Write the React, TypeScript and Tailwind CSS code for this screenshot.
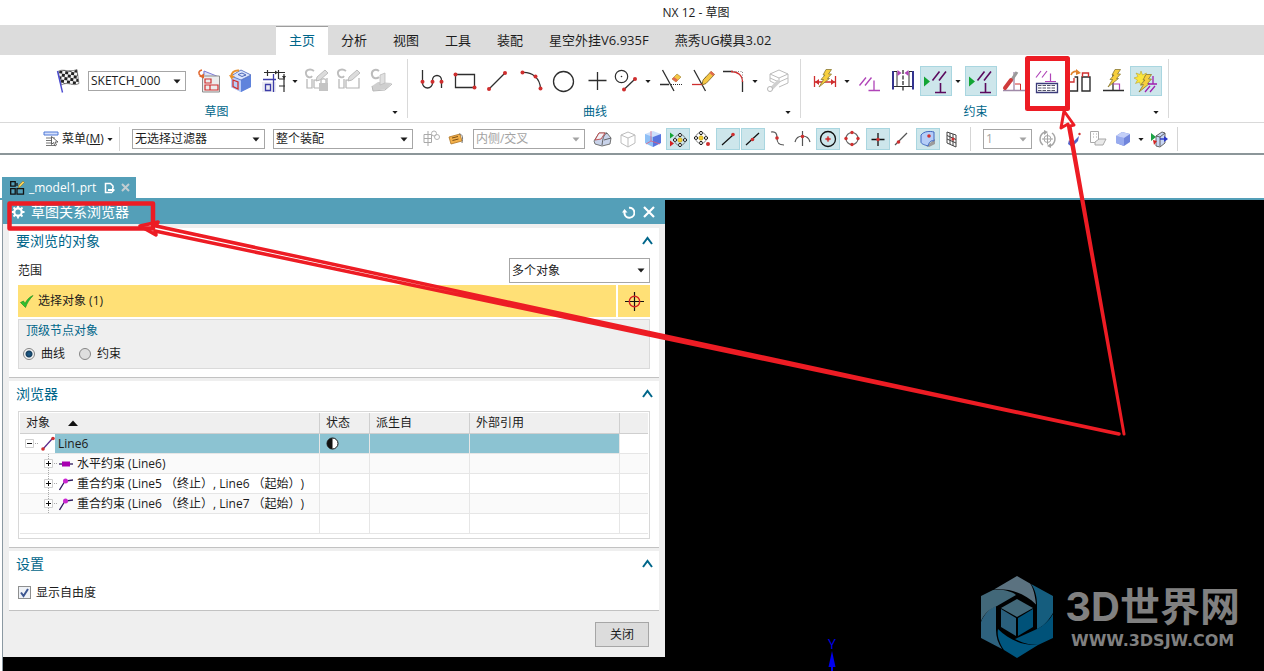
import { useState } from "react";
import type { ReactNode } from "react";
import clsx from "clsx";

const TABS = ["主页", "分析", "视图", "工具", "装配", "星空外挂V6.935F", "燕秀UG模具3.02"];

const RED = "#cf2f2f";
const INK = "#2e2e2e";
const MAGENTA = "#b044b8";
const PLUM = "#5b0a5e";

export default function App() {
  return (
    <div className="relative flex min-h-screen flex-col overflow-hidden bg-white font-['Open_Sans','Noto_Sans_CJK_SC',sans-serif] text-xs text-[#1c1c1c] [text-spacing-trim:space-all]">
      <header className="flex h-[25px] items-center justify-center pl-32">
        <h1 className="text-xs">NX 12 - 草图</h1>
      </header>
      <TabBar />
      <Ribbon />
      <SelectionBar />
      <PartTab />
      <main className="flex flex-1 border-t-2 border-[#549fb8] pl-0.5">
        <div className="flex flex-1 items-start border-l border-[#8b99a2] bg-black">
          <RelationsDialog />
          <Viewport />
        </div>
      </main>
      <Annotations />
    </div>
  );
}

/* ---------- shared bits ---------- */

const Caret = ({ className = "" }: { className?: string }) => (
  <svg className={clsx("pointer-events-none shrink-0", className)} width="8" height="5" viewBox="0 0 8 5">
    <path d="M0.5 0.5h7L4 4.5z" fill="currentColor" />
  </svg>
);

type PickerProps = { label: string; options: string[]; className: string; disabled?: boolean };

const Picker = ({ label, options, className, disabled }: PickerProps) => (
  <div className={clsx("relative flex shrink-0 items-center", className, disabled && "text-[#a3a3a3]")}>
    <select
      aria-label={label}
      disabled={disabled}
      className="h-full w-full appearance-none border border-[#a6a6a6] bg-white pl-0.5 text-xs"
    >
      {options.map((o) => (
        <option key={o}>{o}</option>
      ))}
    </select>
    <Caret className="absolute right-[5px]" />
  </div>
);

type ToolProps = { label: string; on?: boolean; children: ReactNode };

const Tool = ({ label, on, children }: ToolProps) => (
  <button
    aria-label={label}
    className={clsx("h-[30px] w-8 shrink-0", on && "bg-[#cde6eb] outline outline-1 -outline-offset-1 outline-[#a9d6e0]")}
  >
    <svg width="32" height="30" viewBox="0 0 32 30" fill="none">
      {children}
    </svg>
  </button>
);

// icon + drop-down caret that belong together
const SplitTool = ({ label, on, wide, children }: ToolProps & { wide?: boolean }) => (
  <div className="flex shrink-0 items-center">
    {on || wide ? (
      <Tool label={label} on={on}>
        {children}
      </Tool>
    ) : (
      <button aria-label={label} className="h-[30px] w-7">
        <svg width="28" height="30" viewBox="0 0 28 30" fill="none">
          {children}
        </svg>
      </button>
    )}
    <button aria-label={label + "选项"} className="flex h-[30px] w-3 items-center justify-center">
      <Caret className="w-1.5" />
    </button>
  </div>
);

const MiniTool = ({ label, on, children }: ToolProps) => (
  <button
    aria-label={label}
    className={clsx("h-[22px] w-6 shrink-0", on && "bg-[#cde6eb] outline outline-1 -outline-offset-1 outline-[#a9d6e0]")}
  >
    <svg width="24" height="22" viewBox="0 0 24 22" fill="none">
      {children}
    </svg>
  </button>
);

const Dot = ({ x, y, r = 2 }: { x: number; y: number; r?: number }) => <circle cx={x} cy={y} r={r} fill={RED} />;

const Bolt = ({ x = 0, y = 0 }: { x?: number; y?: number }) => (
  <path
    transform={`translate(${x} ${y})`}
    d="M8 0.5h5.500L10.500 5h3L9.500 9.500h2L1 18l4.500-7.500H3L7 6H5z"
    fill="#f7cf3d"
    stroke="#8a7a35"
    strokeWidth="0.8"
  />
);

/* ---------- top bars ---------- */

const TabBar = () => (
  <nav className="flex h-[30px] shrink-0 items-end bg-[#dcdcdc] pl-[276px] text-[13px]">
    {TABS.map((t, i) => (
      <a
        key={t}
        href="#"
        className={clsx(
          "flex h-[29px] shrink-0 items-center whitespace-nowrap px-[13px]",
          i === 0 && "border-t border-[#9d9d9d] bg-white text-[#00668a]"
        )}
      >
        {t}
      </a>
    ))}
  </nav>
);

type GroupProps = { title: string; className: string; labelClass?: string; children: ReactNode };

const Group = ({ title, className, labelClass, children }: GroupProps) => (
  <section className="flex shrink-0 flex-col justify-between border-r border-[#d9d9d9]">
    <div className={clsx("flex h-[37px] items-center pt-[7px]", className)}>{children}</div>
    <div className="flex items-center pr-1.5 leading-3">
      <span className={clsx("flex-1 text-center text-[#00668a]", labelClass)}>{title}</span>
      <button aria-label={title + "选项"} className="flex h-3 w-3 items-center justify-center">
        <Caret className="w-1.5" />
      </button>
    </div>
  </section>
);

const ParallelPerp = () => (
  <>
    <path d="M4 10.500V20.500L10 15.500z" fill="#12a534" />
    <path d="M12.500 14.500L19.500 5.500M19 14.500L26 5.500M20.500 17v9M15 26.500h11" stroke={PLUM} strokeWidth="1.600" />
  </>
);

const Ribbon = () => (
  <div className="flex h-[68px] shrink-0 border-b border-[#d9d9d9] py-1">
    <Group title="草图" className="w-[407px] pl-[51px]" labelClass="pl-11">
      <Tool label="完成草图">
        <defs>
          <pattern id="check" width="6" height="6" patternUnits="userSpaceOnUse" patternTransform="rotate(8)">
            <rect width="6" height="6" fill="#f4f4f4" />
            <rect width="3" height="3" fill="#222" />
            <rect x="3" y="3" width="3" height="3" fill="#222" />
          </pattern>
        </defs>
        <path d="M7 5.500C12 2 17 7 26 3.500L28 17.500C22 21 17 15 10.500 19z" fill="url(#check)" stroke="#666" strokeWidth="0.7" />
        <path d="M6.500 5l5 21.500" stroke="#4a4ad0" strokeWidth="1.400" />
      </Tool>
      <Picker label="草图名称" options={["SKETCH_000"]} className="ml-[5px] mr-[7px] h-5 w-[98px]" />
      <Tool label="定向到草图">
        <path d="M11 5l14 6v14H9V9" fill="#dfe4f6" />
        <path d="M11 5l15 6M11 5v4" stroke="#7b79d6" />
        <path d="M9.500 10h17v16h-17z" fill="#ececec" stroke="#8c8c8c" />
        <path d="M12 13h6v4h-6zM12 19h5v5h-5zM17 19h8v5h-8z" stroke={RED} strokeWidth="1.200" />
        <path d="M9 4c-4 1-4 4-1 6" stroke="#e0662e" strokeWidth="1.500" />
        <path d="M6 10.500l5-3v5z" fill="#e0662e" />
      </Tool>
      <Tool label="重新附着">
        <path d="M6 10L16 4l10 5v12l-10 5-10-5z" fill="#8fabee" />
        <path d="M6 10l10 4v12L6 21z" fill="#b9ccf8" />
        <path d="M16 14l10-5v12l-10 5z" fill="#5f83dc" />
        <path d="M16 4l10 5-10 5-10-4z" fill="#dbe5fc" stroke="#4e68b9" strokeWidth="0.8" />
        <path d="M13 8.500l4-1.500 4 2-4 1.500z" stroke="#4e68b9" />
        <path d="M8 14l5 2v7l-5-2.500z" stroke={RED} strokeWidth="1.300" />
        <path d="M14 4.500C9 4 6 7 6.500 11" stroke="#e8902c" strokeWidth="2" />
        <path d="M4 9l6 1-3.500 3.500z" fill="#e8902c" />
      </Tool>
      <SplitTool label="尺寸" wide>
        <path d="M5 16h14v10H5z" fill="#ececf3" />
        <path d="M7 6.500h21M10.500 4v6M21.500 4v9M27 8v18M22 13h6M22 20h6" stroke={INK} strokeWidth="1.200" />
        <path d="M6 13.500h13M16.500 8v18M8.500 18.500h5v6h-5z" stroke="#3c3ca8" strokeWidth="1.300" />
        <path d="M21 6.500l-3-2v4zM27 13l-2-3h4z" fill={INK} />
      </SplitTool>
      <Tool label="创建定位尺寸">
        <GrayLoop />
        <path d="M18 17h9v8h-9z" fill="#c4c4c4" />
        <path d="M20 17v-3a3 3 0 0 1 5 0v3" stroke="#c4c4c4" strokeWidth="1.500" />
      </Tool>
      <Tool label="评估草图">
        <GrayLoop />
      </Tool>
      <Tool label="更新模型">
        <path d="M14 5C10 2 6 5 7 9s5 4 7 2" stroke="#bdbdbd" strokeWidth="2" />
        <path d="M7 20l6-4 14 1-6 6-13 2z" fill="#cfcfcf" />
        <path d="M15 9l5-2v10l-5 2z" fill="#e0e0e0" stroke="#bbb" strokeWidth="0.800" />
        <path d="M7 20l1 5 12-1 7-6" stroke="#b7b7b7" />
      </Tool>
    </Group>

    <Group title="曲线" className="w-[392px] gap-px pl-2">
      <Tool label="轮廓">
        <path d="M6.500 4v13a5 5 0 0 0 10 0v-3a4.500 4.500 0 0 1 9 0v8" stroke={INK} strokeWidth="1.300" />
        <Dot x={6.5} y={15.7} />
        <Dot x={16.5} y={15.7} />
        <Dot x={25.5} y={15.7} />
      </Tool>
      <Tool label="矩形">
        <path d="M6.500 8.500h19v13h-19z" stroke={INK} strokeWidth="1.300" />
        <Dot x={6.5} y={8.5} />
        <Dot x={25.5} y={21.5} />
      </Tool>
      <Tool label="直线">
        <path d="M7 23L23 7" stroke={INK} strokeWidth="1.300" />
        <Dot x={7} y={23} />
        <Dot x={23} y={7} />
      </Tool>
      <Tool label="圆弧">
        <path d="M7.500 6.500C17 6 25 12 25.500 22.500" stroke={INK} strokeWidth="1.300" />
        <Dot x={7.5} y={6.5} />
        <Dot x={20.5} y={10.5} />
        <Dot x={25.5} y={22.5} />
      </Tool>
      <Tool label="圆">
        <circle cx="15.500" cy="15.500" r="10" stroke={INK} strokeWidth="1.300" />
      </Tool>
      <Tool label="点">
        <path d="M16.500 6v18M7.500 14.500h18" stroke={INK} strokeWidth="1.300" />
      </Tool>
      <SplitTool label="派生曲线">
        <circle cx="7.500" cy="10.500" r="6.200" stroke={INK} strokeWidth="1.200" />
        <circle cx="7.500" cy="10.500" r="0.800" fill={INK} />
        <path d="M10 23.500L21 13" stroke={INK} strokeWidth="1.300" />
        <Dot x={10} y={23.5} />
        <Dot x={21} y={13} />
      </SplitTool>
      <Tool label="快速修剪">
        <path d="M7.500 4L19 25M5 18.500h9" stroke={INK} strokeWidth="1.300" />
        <path d="M16 18.500h11" stroke={INK} strokeDasharray="1 1" />
        <path d="M17 13l5-5 4 3-5 5z" fill="#f5c744" stroke="#9b7d2d" strokeWidth="0.600" />
        <path d="M17 13l2-2 4 3-2 2z" fill="#e06a50" />
      </Tool>
      <Tool label="快速延伸">
        <path d="M6 4l11.500 21M14 18.500L18 11" stroke={INK} strokeWidth="1.300" />
        <path d="M4 18.500h11" stroke={RED} strokeWidth="1.300" />
        <path d="M14 19l1-5 8-8.500 3.500 3-8.500 9z" fill="#f5c744" stroke="#7b6223" strokeWidth="0.800" />
        <path d="M21.500 7l1.500-2 3.500 3-1.500 2z" fill="#e06a50" />
      </Tool>
      <SplitTool label="圆角">
        <path d="M2 5.500h10M21.500 15v11" stroke={INK} strokeWidth="1.300" />
        <path d="M10 5.500c7 0 11.500 4 11.500 10.500" stroke={RED} strokeWidth="1.300" />
        <path d="M12 5.500h9.500V14" stroke="#888" strokeDasharray="1 1.500" />
      </SplitTool>
      <Tool label="编辑曲线">
        <path d="M8 8l9-4 9 4-9 4zM8 8v7l6 3M26 8v9l-9 4M17 12v5M8 12l9 4 9-4" stroke="#bcbcbc" />
        <path d="M17 15L9 23" stroke="#cfcfcf" strokeWidth="3.500" />
        <circle cx="8" cy="23" r="2.500" fill="#fff" stroke="#b5b5b5" />
      </Tool>
    </Group>

    <Group title="约束" className="w-[367px] gap-px pl-3">
      <SplitTool label="快速尺寸">
        <path d="M1.500 10v11M22.500 10v11M2 16h20" stroke={RED} strokeWidth="1.300" />
        <path d="M2 16l4-3v6zM22 16l-4-3v6z" fill={RED} />
        <Bolt x={5} y={3} />
      </SplitTool>
      <Tool label="几何约束">
        <path d="M5.500 19.500l6.500-8M11 19.500l6.500-8M20 14.500v10M14.500 24.500H26" stroke={MAGENTA} strokeWidth="1.300" />
      </Tool>
      <Tool label="设为对称">
        <path d="M6 5v18.500M26 5v18.500" stroke="#34348f" strokeWidth="2" />
        <path d="M7 5.500h3v15H7M25 5.500h-3v15h3M10 20.500h12" stroke={INK} />
        <path d="M16 4v22" stroke={INK} strokeWidth="1.300" strokeDasharray="4 1.500" />
        <path d="M10.500 4l4 3-4 3zM21.500 4l-4 3 4 3z" fill={MAGENTA} />
      </Tool>
      <SplitTool label="显示草图约束" on>
        <ParallelPerp />
      </SplitTool>
      <Tool label="显示约束" on>
        <ParallelPerp />
      </Tool>
      <Tool label="自动判断约束设置">
        <path d="M5 24.500h22M16 6v18" stroke="#a08aa8" strokeWidth="1.300" />
        <path d="M17 18h5.500v6" stroke={RED} />
        <path d="M19 6l-6 9" stroke="#9a9a9a" strokeWidth="3" />
        <path d="M13 14l-6 8" stroke="#cf3b3b" strokeWidth="4" strokeLinecap="round" />
      </Tool>
      <Tool label="草图关系浏览器">
        <path d="M5 11.500L10 5M11 11.500L16 5M19.500 7.500v8M14 15.500h11" stroke={MAGENTA} strokeWidth="1.200" />
        <path d="M5.500 17.500h21v9h-21z" fill="#fff" stroke="#3b3b7a" strokeWidth="1.300" />
        <path d="M7 19.500h18M7 22h18M7 24.500h18" stroke="#55556a" strokeDasharray="3.500 1" />
      </Tool>
      <Tool label="动画演示尺寸">
        <path d="M4 16h6v-4" stroke={RED} strokeWidth="1.300" />
        <path d="M4 25h9.500V11h-3M18 25V11h8v14z" stroke={INK} strokeWidth="1.400" />
        <path d="M18.500 11V7h6v4" stroke={RED} strokeWidth="1.400" />
        <path d="M7 9c1-4 5-4 7-3" stroke="#e0832e" strokeWidth="1.600" />
        <path d="M12 3l5 4-5 2z" fill="#e0832e" />
      </Tool>
      <Tool label="自动约束">
        <path d="M6 24.500h21M16 8v16" stroke={INK} strokeWidth="1.300" />
        <path d="M16 18h6.500v6" stroke={MAGENTA} strokeWidth="1.200" />
        <Bolt x={10} y={3} />
      </Tool>
      <Tool label="连续自动标注尺寸" on>
        <path d="M11 5l1.500 4 4-2-2 4 4 1.500-4 1.500 1.500 4-3.500-2-1.500 4-1.500-4-4 1.500 2-3.500L4 12l4-1.500L6 7l4 1.500z" fill="#fbe63c" stroke="#b59a1e" strokeWidth="0.500" />
        <Bolt x={8} y={8} />
        <path d="M23 10v8M18 18h9M15 26l5-6M20 26l5-6" stroke="#a01fb0" strokeWidth="1.300" />
      </Tool>
    </Group>
  </div>
);

const GrayLoop = () => (
  <>
    <path d="M13 5C9 2 4 4 5 8s5 4 6 2" stroke="#bdbdbd" strokeWidth="1.800" />
    <path d="M6 13v9h5v-9M13 22v-8h5M13 22h13V12" stroke="#b3b3b3" strokeWidth="1.200" />
    <path d="M15 15l1-4 8-7 3 3-8 7z" fill="#dcdcdc" stroke="#b0b0b0" strokeWidth="0.800" />
  </>
);

const PointWheel = ({ x, y }: { x: number; y: number }) => (
  <g transform={`translate(${x} ${y})`}>
    <circle r="5.500" stroke="#555" strokeWidth="0.700" />
    <circle r="2.200" fill="#f6d22e" stroke="#ae8f1e" strokeWidth="0.600" />
    {[0, 90, 180, 270].map((a) => (
      <ellipse key={a} cx="5" rx="1.700" ry="1.400" fill="#fff" stroke="#222" transform={`rotate(${a})`} />
    ))}
  </g>
);

const SelectionBar = () => (
  <div className="flex h-8 shrink-0 items-center border-b-2 border-[#8c9699] pt-0.5">
    <button className="ml-[43px] flex shrink-0 items-center gap-[3px]">
      <svg width="16" height="16" viewBox="0 0 16 16" fill="none">
        <path d="M1 1h14v3H1z" fill="#d5e0fb" stroke="#4f78d6" />
        <path d="M3 7h9M3 9.500h7M3 12h7M3 14.500h9" stroke="#777" />
        <path d="M8.500 5.500v8l2-2 1.500 3.500 1.500-1-1.500-3h3z" fill="#fff" stroke="#444" strokeWidth="0.800" />
      </svg>
      <span>
        菜单(<u>M</u>)
      </span>
      <Caret className="w-1.5" />
    </button>
    <i className="ml-1.5 h-6 w-px shrink-0 bg-[#d5d5d5]" />
    <Picker label="选择过滤器" options={["无选择过滤器"]} className="ml-3 h-5 w-[133px]" />
    <Picker label="选择范围" options={["整个装配"]} className="ml-2 h-5 w-[140px]" />
    <div className="ml-1.5 mr-[5px] flex shrink-0 gap-px">
      <MiniTool label="选择组">
        <path d="M9 3v15M5 6.500h7.500v8H5zM5 10.500h7.500" stroke="#a9a9a9" />
        <circle cx="15" cy="5.500" r="2.500" stroke="#b3b3b3" />
        <circle cx="18" cy="9" r="2.500" stroke="#b3b3b3" />
      </MiniTool>
      <MiniTool label="选择意图">
        <path d="M5 9l11-3 2 7-11 3z" fill="#f3b04a" stroke="#ad7323" strokeWidth="0.800" />
        <path d="M8 10l6-1.500M8.500 12.500l6-1.500" stroke="#7a4e15" />
        <path d="M15 6c4 0 4 4 3 9" stroke="#777" />
      </MiniTool>
    </div>
    <Picker label="框选规则" options={["内侧/交叉"]} className="h-5 w-[112px]" disabled />
    <div className="ml-1.5 flex shrink-0 gap-px">
      <MiniTool label="小平面体">
        <path d="M3 13l5-8h8l4 5-1 6-8 2-7-2z" fill="#c9d3ea" stroke="#666" strokeWidth="0.900" />
        <path d="M16 5c-4 2-4 6-5 12M13 12l7-2" stroke="#555" strokeWidth="0.900" />
        <path d="M8 5h6l-4 6-6 1z" fill="#f1f1f6" stroke="#b33" strokeWidth="0.800" />
      </MiniTool>
      <MiniTool label="线框">
        <path d="M5 7l7-3 7 3v8l-7 4-7-4zM5 7l7 3 7-3M12 10v9" stroke="#bdbdbd" />
      </MiniTool>
      <MiniTool label="着色">
        <path d="M4 6l8-3 8 3v9l-8 4-8-4z" fill="#cddffb" />
        <path d="M4 6l8 3v10l-8-4z" fill="#8fc0f6" />
        <path d="M12 9l8-3v9l-8 4z" fill="#5875df" />
        <path d="M10 3v10l-5 3M10 13l9 3" stroke="#e0617d" strokeWidth="0.800" />
      </MiniTool>
      <MiniTool label="启用捕捉点" on>
        <path d="M4 4.500l4 3-4 3z" fill="#12a534" />
        <path d="M4 12.500l4 3-4 3z" fill="#d32222" />
        <PointWheel x={14} y={12} />
      </MiniTool>
      <MiniTool label="捕捉点设置">
        <PointWheel x={10} y={10} />
        <Dot x={17} y={16} />
      </MiniTool>
      <MiniTool label="端点" on>
        <path d="M6 17L17 7" stroke="#111" strokeWidth="1.200" />
        <Dot x={17} y={6.5} r={1.8} />
      </MiniTool>
      <MiniTool label="中点" on>
        <path d="M5 17L18 5" stroke="#111" strokeWidth="1.200" />
        <Dot x={11.5} y={11.5} r={1.8} />
      </MiniTool>
      <MiniTool label="控制点">
        <path d="M5 4c5-1 6 2 6 6s1 7 7 7" stroke="#555" strokeWidth="1.200" />
        <Dot x={11} y={10} r={1.8} />
      </MiniTool>
      <MiniTool label="交点">
        <path d="M4 14c2-8 13-8 15 0M11.500 3v15" stroke="#555" strokeWidth="1.200" />
        <Dot x={11.5} y={8.5} r={1.8} />
      </MiniTool>
      <MiniTool label="圆弧中心" on>
        <circle cx="12" cy="11" r="7.500" stroke="#111" strokeWidth="1.300" />
        <path d="M9 11h6M12 8v6" stroke={RED} />
        <Dot x={12} y={11} r={1.8} />
      </MiniTool>
      <MiniTool label="象限点">
        <circle cx="11" cy="10.500" r="6" stroke="#666" strokeWidth="1.100" />
        <Dot x={11} y={4.5} r={1.7} />
        <Dot x={11} y={16.5} r={1.7} />
        <Dot x={5} y={10.5} r={1.7} />
        <Dot x={17} y={10.5} r={1.7} />
      </MiniTool>
      <MiniTool label="现有点" on>
        <path d="M12 5v13M5.500 11.500h13" stroke="#111" strokeWidth="1.300" />
        <Dot x={12} y={11.5} r={1.7} />
      </MiniTool>
      <MiniTool label="曲线上的点">
        <path d="M4 17L16 5" stroke="#555" strokeWidth="1.200" />
        <Dot x={7.5} y={14} r={1.8} />
      </MiniTool>
      <MiniTool label="面上的点" on>
        <path d="M10 18l9-7v5l-6 3z" fill="#9c9c9c" />
        <path d="M5 7c3-4 9-4 13-3v9c-3-1-5 1-6 5-3-1-7-2-7-4z" fill="#b5cdf8" stroke="#3e66c0" />
        <Dot x={13} y={8} r={1.8} />
      </MiniTool>
      <MiniTool label="有界栅格点">
        <path d="M6 4l9 3v12l-9-4zM9 5v11M12 6v12M6 7.500l9 4M6 11l9 4" stroke="#444" />
        <Dot x={12} y={11} r={1.6} />
      </MiniTool>
    </div>
    <i className="ml-[5px] h-6 w-px shrink-0 bg-[#d5d5d5]" />
    <Picker label="图层" options={["1"]} className="ml-3 h-5 w-[49px]" disabled />
    <div className="ml-1 flex shrink-0 items-center gap-px">
      <MiniTool label="旋转">
        <path d="M9 4a7.500 7.500 0 0 0-2 13M14 18a7.500 7.500 0 0 0 2-13" stroke="#a5a5a5" strokeWidth="1.500" />
        <circle cx="11.500" cy="11" r="3.500" stroke="#a5a5a5" />
        <path d="M11.500 5.500v11M6 11h11" stroke="#a5a5a5" />
        <path d="M8 2l4 2-4 3zM15 20l-4-2 4-3z" fill="#a5a5a5" />
      </MiniTool>
      <MiniTool label="编辑截面">
        <path d="M8 12l3 3 7-7-1 5-6 6-4-3z" fill="#4f63cc" />
        <Dot x={18.5} y={6} r={1.2} />
      </MiniTool>
      <MiniTool label="属性">
        <path d="M4.500 3.500h8v11h-8zM7 6h1M7 9h1M10 6h1M10 9h1" stroke="#aaa" />
        <path d="M9 14l4-3h7l-3 6H9z" fill="#e9e9e9" stroke="#a8a8a8" />
      </MiniTool>
      <MiniTool label="渲染样式">
        <path d="M5 8l6-4 8 2v8l-6 4-8-3z" fill="#7085dc" />
        <path d="M5 8l8 2v8l-8-3z" fill="#98abee" />
        <path d="M5 8l6-4 8 2-6 4z" fill="#c3cff8" />
      </MiniTool>
      <button aria-label="渲染样式选项" className="flex h-[22px] w-2.5 items-center justify-center">
        <Caret className="w-1.5" />
      </button>
      <MiniTool label="退出">
        <path d="M4 5l5 4-5 4z" fill="#1ba345" />
        <path d="M9 8l6-4 3 1v10l-5 4-4-1z" fill="#c8d6f4" stroke="#555" strokeWidth="0.900" />
        <path d="M13 9v9M9 8l4 1 5-4" stroke="#555" strokeWidth="0.900" />
        <path d="M6 12l4 1-3 4z" fill="#d32222" />
        <path d="M13 11h5" stroke="#2a37c8" strokeWidth="1.400" />
        <path d="M17 8l4 3-4 3z" fill="#2a37c8" />
      </MiniTool>
    </div>
    <i className="ml-1.5 h-6 w-px shrink-0 bg-[#d5d5d5]" />
  </div>
);

const PartTab = () => (
  <div className="flex pl-0.5 pt-[22px]">
    <div className="flex h-[21px] w-[134px] items-center bg-[#549fb8] pl-2 text-white">
      <svg width="15" height="14" viewBox="0 0 15 14" fill="none">
        <path d="M0.700 0.700h4.500v4.500H0.700zM0.700 7.700h4.500v5.500H0.700zM7 7.700h6.500v5.500H7zM7 5V2" stroke="#111" strokeWidth="1.300" />
        <path d="M8 7l1-3 4-4 1.500 1.500-4 4z" fill="#f5d35a" stroke="#7b6223" strokeWidth="0.500" />
      </svg>
      <span className="ml-1 flex-1">_model1.prt</span>
      <svg width="11" height="12" viewBox="0 0 11 12" fill="none">
        <path d="M8 10.500H1.500V1.500h5L9 4v2" stroke="#fff" strokeWidth="1.500" />
        <path d="M4 7h4V5l3 3-3 3V9H4z" fill="#fff" />
      </svg>
      <button aria-label="关闭标签" className="mx-1.5">
        <svg width="9" height="9" viewBox="0 0 9 9">
          <path d="M1 1l7 7M8 1L1 8" stroke="#c2cdd1" strokeWidth="2" />
        </svg>
      </button>
    </div>
  </div>
);

/* ---------- dialog ---------- */

const Card = ({ title, className, children }: { title: string; className: string; children: ReactNode }) => (
  <section className={clsx("border-b border-[#c2c2c2] bg-white px-[9px]", className)}>
    <div className="-ml-0.5 -mr-[7px] flex h-[26px] items-center justify-between">
      <h2 className="text-sm text-[#00668a]">{title}</h2>
      <button aria-label={"折叠" + title} className="px-1 pb-1 pt-0.5">
        <svg width="11" height="9" viewBox="0 0 11 9" fill="none">
          <path d="M1 8l4.500-6L10 8" stroke="#00668a" strokeWidth="2" />
        </svg>
      </button>
    </div>
    {children}
  </section>
);

const RelationsDialog = () => {
  const [node, setNode] = useState("curve");
  const [dof, setDof] = useState(true);

  return (
    <div className="w-[662px] shrink-0 bg-[#efefef]">
      <div className="flex h-6 items-center bg-[#549fb8] pl-2 pr-2.5 text-white">
        <svg width="14" height="14" viewBox="0 0 14 14" fill="none">
          <circle cx="7" cy="7" r="3.700" stroke="#fff" strokeWidth="2.200" />
          <path d="M7 0.500v13M0.500 7h13M2.500 2.500l9 9M11.500 2.500l-9 9" stroke="#fff" strokeWidth="1.800" />
          <circle cx="7" cy="7" r="2.600" fill="#549fb8" />
        </svg>
        <h2 className="flex-1 pl-1.5 text-sm">草图关系浏览器</h2>
        <button aria-label="重置" className="mr-2">
          <svg width="13" height="13" viewBox="0 0 13 13" fill="none">
            <path d="M7 1.700a5 5 0 1 1-4.500 6V5" stroke="#fff" strokeWidth="2" />
            <path d="M0 6.500L2.500 3l3 3.500z" fill="#fff" />
          </svg>
        </button>
        <button aria-label="关闭对话框">
          <svg width="12" height="12" viewBox="0 0 12 12">
            <path d="M1 1l10 10M11 1L1 11" stroke="#fff" strokeWidth="2.200" />
          </svg>
        </button>
      </div>

      <div className="flex flex-col gap-[3px] px-1.5 pb-2.5 pt-1">
        <Card title="要浏览的对象" className="pb-2">
          <div className="flex h-[31px] items-center justify-between pt-0.5">
            <span>范围</span>
            <Picker label="范围" options={["多个对象"]} className="h-[25px] w-[141px]" />
          </div>
          <div className="flex h-8 gap-0.5">
            <div className="flex flex-1 items-center gap-1 bg-[#ffe076] pl-0.5">
              <svg width="14" height="13" viewBox="0 0 14 13">
                <path d="M0.500 7.500l3-1.500 1.500 2.500C7 4.500 9.500 2 13 0.500 9.500 4.500 7 8 5.500 12.500z" fill="#2fc22f" stroke="#178a1b" strokeWidth="0.600" />
              </svg>
              <span>选择对象 (1)</span>
            </div>
            <button aria-label="选择对象" className="flex w-8 items-center justify-center bg-[#ffe076]">
              <svg width="19" height="19" viewBox="0 0 19 19" fill="none">
                <path d="M9.500 0v19M0 9.500h19" stroke="#111" strokeWidth="1.200" />
                <circle cx="9.500" cy="9.500" r="5.200" stroke="#d32222" strokeWidth="1.400" />
              </svg>
            </button>
          </div>
          <fieldset className="mt-0.5 h-[50px] border border-[#dadada] bg-[#efefef] pl-[7px]">
            <legend className="float-left w-full leading-[22px] text-[#00668a]">顶级节点对象</legend>
            <div className="clear-both -ml-[3px] flex h-6 items-center gap-3.5">
              <Radio label="曲线" checked={node === "curve"} onPick={() => setNode("curve")} />
              <Radio label="约束" checked={node === "constraint"} onPick={() => setNode("constraint")} />
            </div>
          </fieldset>
        </Card>

        <Card title="浏览器" className="pb-2">
          <div className="mt-1 border border-[#d8d8d8] p-px pb-1">
            <RelationsTable />
          </div>
        </Card>

        <Card title="设置" className="pb-2">
          <label className="mt-1.5 flex h-[19px] items-center gap-[5px]">
            <span className="grid">
              <input
                type="checkbox"
                checked={dof}
                onChange={(e) => setDof(e.target.checked)}
                className="col-start-1 row-start-1 size-[13px] appearance-none border border-[#8e8f8f] bg-[#eef1f6]"
              />
              {dof && (
                <svg className="pointer-events-none col-start-1 row-start-1" width="13" height="13" viewBox="0 0 13 13" fill="none">
                  <path d="M3 6.500l2.500 3.500L10 3" stroke="#3b5590" strokeWidth="2" />
                </svg>
              )}
            </span>
            显示自由度
          </label>
        </Card>

        <div className="flex justify-end pr-2.5 pt-2">
          <button className="h-[25px] w-[54px] border border-[#a6a6a6] bg-[#dcdcdc]">关闭</button>
        </div>
      </div>
    </div>
  );
};

const Radio = ({ label, checked, onPick }: { label: string; checked: boolean; onPick: () => void }) => (
  <label className="flex items-center gap-1.5">
    <input
      type="radio"
      name="top-node"
      checked={checked}
      onChange={onPick}
      className="size-3 appearance-none rounded-full border border-[#858585] bg-[#dedede] checked:bg-[radial-gradient(circle,#1c5f91_0,#17405f_3px,#f4f4f4_4px)]"
    />
    {label}
  </label>
);

const Expander = ({ open }: { open?: boolean }) => (
  <svg width="13" height="19" viewBox="0 0 13 19" fill="none" className="shrink-0">
    {!open && <path d="M4.500 0v5M4.500 14v5" stroke="#aaa" strokeDasharray="1 1" />}
    <path d="M0.500 5.500h8v8h-8z" fill="#fff" stroke="#d0d0d0" />
    <path d={open ? "M2 9.500h5" : "M2 9.500h5M4.500 7v5"} stroke="#111" />
    <path d="M10 9.500h3" stroke="#aaa" strokeDasharray="1 1" />
  </svg>
);

const CoincidentIcon = () => (
  <svg width="14" height="14" viewBox="0 0 14 14" fill="none">
    <path d="M0.500 13L6 4l8-1" stroke="#2c1a5c" strokeWidth="1.300" />
    <circle cx="6.500" cy="4" r="2.500" fill="#c926d0" />
  </svg>
);

const HorizontalIcon = () => (
  <svg width="14" height="14" viewBox="0 0 14 14">
    <path d="M0 7h14" stroke="#2c1a5c" strokeWidth="1.300" />
    <path d="M3 4.500h8v5H3z" fill="#a800b0" />
  </svg>
);

const ROWS = [
  { icon: <HorizontalIcon />, text: "水平约束 (Line6)" },
  { icon: <CoincidentIcon />, text: "重合约束 (Line5 （终止）, Line6 （起始）)" },
  { icon: <CoincidentIcon />, text: "重合约束 (Line6 （终止）, Line7 （起始）)" },
];

const cell = "border-b border-r border-[#e6e6e6] p-0";
const head = "border-b border-r border-[#cfcfcf] p-0 pl-1.5 text-left font-normal";

const BlankCells = () => (
  <>
    <td className={cell} />
    <td className={cell} />
    <td className={cell} />
    <td className="border-b border-[#e6e6e6]" />
  </>
);

const RelationsTable = () => (
  <table className="w-full table-fixed border-separate border-spacing-0">
    <colgroup>
      <col className="w-[300px]" />
      <col className="w-[50px]" />
      <col className="w-[100px]" />
      <col className="w-[150px]" />
      <col />
    </colgroup>
    <thead>
      <tr className="h-[21px] bg-[#efefef]">
        <th className={head}>
          <span className="flex items-center gap-[18px]">
            对象
            <svg width="10" height="6" viewBox="0 0 10 6">
              <path d="M0 6l5-5.500L10 6z" fill="#111" />
            </svg>
          </span>
        </th>
        <th className={head}>状态</th>
        <th className={head}>派生自</th>
        <th className={head}>外部引用</th>
        <th className="border-b border-[#cfcfcf] p-0" />
      </tr>
    </thead>
    <tbody>
      <tr className="h-5">
        <td className={cell}>
          <div className="flex h-[19px] items-center pl-[5px]">
            <Expander open />
            <svg width="17" height="16" viewBox="0 0 17 16" fill="none">
              <path d="M5 13L14 3" stroke="#5b2a8c" strokeWidth="1.200" />
              <Dot x={5} y={13} r={1.8} />
              <Dot x={15} y={2.5} r={1.8} />
            </svg>
            <span className="flex h-full flex-1 items-center bg-[#8cc3d2] pl-[3px]">Line6</span>
          </div>
        </td>
        <td className={clsx(cell, "bg-[#8cc3d2] pl-1.5")}>
          <svg width="13" height="13" viewBox="0 0 13 13">
            <circle cx="6.500" cy="6.500" r="5.500" fill="#fff" stroke="#111" />
            <path d="M6.500 1a5.500 5.500 0 0 0 0 11z" fill="#111" />
          </svg>
        </td>
        <td className={clsx(cell, "bg-[#8cc3d2]")} />
        <td className={clsx(cell, "bg-[#8cc3d2]")} />
        <td className="border-b border-[#e6e6e6]" />
      </tr>
      {ROWS.map((r, i) => (
        <tr key={r.text} className={clsx("h-5", i % 2 === 0 && "bg-[#fafafa]")}>
          <td className={cell}>
            <div className="flex h-[19px] items-center whitespace-nowrap pl-6">
              <Expander />
              <span className="ml-0.5 mr-1">{r.icon}</span>
              {r.text}
            </div>
          </td>
          <BlankCells />
        </tr>
      ))}
      <tr className="h-5">
        <td className={cell} />
        <BlankCells />
      </tr>
    </tbody>
  </table>
);

/* ---------- graphics window ---------- */

const Viewport = () => (
  <div className="relative flex-1 self-stretch overflow-hidden">
    <div className="absolute bottom-0 left-[163px] flex flex-col items-center text-[#0000f0]">
      <span className="text-sm leading-[14px]">Y</span>
      <svg width="8" height="20" viewBox="0 0 8 20">
        <path d="M4 0l3.500 16h-7zM3 15h2v5H3z" fill="#0000f0" />
      </svg>
    </div>
    <div className="absolute bottom-3 right-6 flex items-center gap-[11px] text-[#808080]">
      <svg width="74" height="84" viewBox="0 0 74 84">
        <path d="M37 1L14 14.500C31 13 46 19 56 29.500 55 20 53 12 50 8.500z" fill="#5b7280" />
        <path d="M51 9l22 12v17C67 48 62 52 57 54V30C57 22 55 14 51 9z" fill="#155d7e" />
        <path d="M73 39v24L58 70C48 70 40 67 35 64l22-10C63 51 69 46 73 39z" fill="#005279" />
        <path d="M58 70L37 83 24 75C18 66 17 59 18 54 28 64 42 71 58 70z" fill="#00567f" />
        <path d="M22 74L1 63V47C4 39 10 33 16 31v24C16 62 18 68 22 74z" fill="#2e627e" />
        <path d="M1 46V21l12-6c9-1 19 1 23 5L17 31C9 34 4 39 1 46z" fill="#426879" />
        <path d="M37 24l16 9-16 9-16-9z" fill="#426879" />
        <path d="M21 34l15 9v18l-15-9z" fill="#2a5f7c" />
        <path d="M53 34l-15 9v18l15-9z" fill="#005279" />
      </svg>
      <div className="flex flex-col items-center gap-1">
        <span className="font-['Inter','Noto_Sans_CJK_SC',sans-serif] text-[40px] font-bold leading-[44px]">3D世界网</span>
        <span className="font-['DejaVu_Sans',sans-serif] text-base font-bold leading-4">WWW.3DSJW.COM</span>
      </div>
    </div>
  </div>
);

// callouts linking the ribbon command to the dialog it opens
const Annotations = () => (
  <svg className="pointer-events-none absolute left-0 top-0" width="1264" height="671" viewBox="0 0 1264 671" fill="none" stroke="#ed1c24">
    <rect x="9.500" y="203.500" width="143.500" height="25" strokeWidth="4.500" strokeLinejoin="round" />
    <rect x="1027.500" y="58.500" width="40" height="50" strokeWidth="5" strokeLinejoin="round" />
    <path d="M1124 434L1068 124l-7 4 3-17 10 14-4 1z" strokeWidth="3" strokeLinejoin="round" />
    <path d="M1119 434L156 226l2-4-18 4 16 9-1-4z" strokeWidth="3.500" strokeLinejoin="round" />
  </svg>
);
